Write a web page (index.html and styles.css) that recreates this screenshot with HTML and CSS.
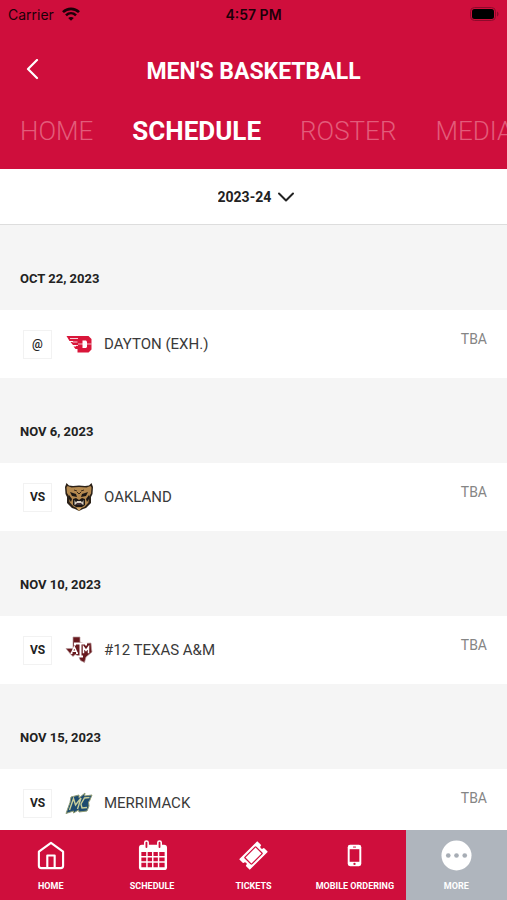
FILE: index.html
```
<!DOCTYPE html>
<html lang="en">
<head>
    <meta charset="UTF-8">
    <meta name="viewport" content="width=device-width, initial-scale=1.0">
    <title>Men's Basketball Schedule</title>
    <link rel="stylesheet" href="styles.css">
</head>
<body>
    <header class="header">
        <div class="status-bar">
            <div class="carrier">
                <span>Carrier</span>
                <svg width="18" height="14" viewBox="0 0 18 14" fill="none" stroke="#1c0008" stroke-width="2.6">
                    <path d="M1 5.2C5.5.7 12.5.7 17 5.2M4 8.4c2.9-2.8 7.1-2.8 10 0"/>
                    <path d="M9 13.8 6.2 11c1.6-1.5 4-1.5 5.6 0z" fill="#1c0008" stroke="none"/>
                </svg>
            </div>
            <time class="clock">4:57 PM</time>
            <svg class="battery" width="29" height="14" viewBox="0 0 29 14">
                <rect x=".5" y=".5" width="25" height="13" rx="4" fill="none" stroke="#8d0a2b"/>
                <rect x="2" y="2" width="22" height="10" rx="2.5" fill="#000"/>
                <path d="M27 4.5c2 .8 2 4.2 0 5z" fill="#8d0a2b"/>
            </svg>
        </div>
        <div class="title-bar">
            <button class="back" aria-label="Back">
                <svg width="14" height="22" viewBox="0 0 14 22" fill="none" stroke="#fff" stroke-width="2.2" stroke-linecap="round" stroke-linejoin="round">
                    <path d="M12 1 3 10l9 9"/>
                </svg>
            </button>
            <h1 class="title">MEN'S BASKETBALL</h1>
        </div>
        <nav class="tabs" aria-label="Team">
            <a class="tab" href="#home">HOME</a>
            <a class="tab active" href="#schedule">SCHEDULE</a>
            <a class="tab" href="#roster">ROSTER</a>
            <a class="tab" href="#media">MEDIA</a>
        </nav>
    </header>

    <main class="content">
        <div class="season">
            <select class="season-select" id="season" aria-label="Season">
                <option>2023-24</option>
            </select>
            <svg class="chevron" width="18" height="12" viewBox="0 0 18 12" fill="none" stroke="#222" stroke-width="2" stroke-linecap="round" stroke-linejoin="round">
                <path d="m2 2.5 7 7 7-7"/>
            </svg>
        </div>

        <section class="day">
            <h2 class="date">OCT 22, 2023</h2>
            <div class="game">
                <span class="place at">@</span>
                <svg class="logo" viewBox="0 0 28 28" aria-hidden="true">
                    <path d="M1.500 6H23.500l3 3v10.500l-3 3H12.500V19h-2l-2-2.500h2.500V15H8l-2.500-3H8v-1H4.500z" fill="#d9163a"/>
                    <path d="M5 8.500h8M7.500 12h5M10 15.500h3" stroke="#fff" stroke-width=".8"/>
                    <path d="M17.500 10.500h3.500l1 1v5.500l-1 1h-3.500z" fill="#fff"/>
                    <path d="M13 14h13.500" stroke="#fff" stroke-width=".7"/>
                </svg>
                <span class="team">DAYTON (EXH.)</span>
                <span class="time">TBA</span>
            </div>
        </section>

        <section class="day">
            <h2 class="date">NOV 6, 2023</h2>
            <div class="game">
                <span class="place">VS</span>
                <svg class="logo" viewBox="0 0 28 28" aria-hidden="true">
                    <path d="M0 4 1.500 0 4 2.500 8 3l6-.5 6 .5 4-.5L26.500 0 28 4l-.5 7-1.500 3v6l-5 5-3 1-4 2-4-2-3-1-5-5v-6L.5 11z" fill="#2b2118"/>
                    <path d="M1.500 4.500 2.500 3l4 1.500L14 4l7.500.5 4-1.500 1 1.500-.5 6-2 3-.5 6-4 4.500L14 26l-5.500-2.500-4-4.500L4 13l-2-3z" fill="#b58a50"/>
                    <path d="m5 9 6 2 1 3-5-1zM23 9l-6 2-1 3 5-1zM8 16l3-1 3 2 3-2 3 1v6l-3 2h-6l-3-2zM4 12l3 4-1 3-2-3zM24 12l-3 4 1 3 2-3z" fill="#1d1815"/>
                    <path d="m12 9 2 2 2-2M9 7l3 1m7-1-3 1" stroke="#3b2a19" fill="none"/>
                    <path d="m9.500 17 1.500 2.500 1-1.500h4l1 1.500 1.500-2.500v5l-2-1h-5l-2 1z" fill="#ddd5c8"/>
                    <path d="M11.500 20h5v2h-5z" fill="#47333a"/>
                    <path d="M11.500 25h5L14 28z" fill="#d0a868"/>
                </svg>
                <span class="team">OAKLAND</span>
                <span class="time">TBA</span>
            </div>
        </section>

        <section class="day">
            <h2 class="date">NOV 10, 2023</h2>
            <div class="game">
                <span class="place">VS</span>
                <svg class="logo" viewBox="0 0 28 28" aria-hidden="true">
                    <path d="M8 1h7v5l4 1.500 7-.5.5 6 .5 3-6 5-1.500 5.500-4-2-2.500-5-3-1-2 2-3-3-4-5h7z" fill="#68191e" stroke="#b99c9d" stroke-width=".7"/>
                    <g stroke="#fff" fill="none">
                        <path d="M10 9.500v-2h11v2M15.500 8v12.500M13 20.500h5" stroke-width="2"/>
                        <path d="m6.500 17 2.800-6 2.800 6M8 15.300h3M5.500 17.300h2m3.500 0h2M18.500 17.300V11l2.500 3.500 2.500-3.500v6.300" stroke-width="1.500"/>
                    </g>
                </svg>
                <span class="team">#12 TEXAS A&amp;M</span>
                <span class="time">TBA</span>
            </div>
        </section>

        <section class="day">
            <h2 class="date">NOV 15, 2023</h2>
            <div class="game">
                <span class="place">VS</span>
                <svg class="logo" viewBox="0 0 28 28" aria-hidden="true">
                    <path d="M6 8 14 6v3l6-5-.5 3L27 6l-2.500 6-1 1 .5 4-2 5-8 1-.5-2-5 3v-2L1 24.500l4-11z" fill="#1e4b70" stroke="#8f9b74" stroke-width="1"/>
                    <path d="m4.500 21 4-11.500L10.500 16l5.500-7-3.500 11" fill="none" stroke="#c9cf9a" stroke-width="1.400"/>
                    <path d="m24.500 8.500-5 .5-3.500 6 1 4 5-.5" fill="none" stroke="#c9cf9a" stroke-width="1.400"/>
                </svg>
                <span class="team">MERRIMACK</span>
                <span class="time">TBA</span>
            </div>
        </section>
    </main>

    <nav class="bottom-nav" aria-label="Main">
        <a class="nav-item" href="#home">
            <svg class="nav-icon" viewBox="0 0 32 32" fill="none" stroke="#fff" stroke-width="2.2" stroke-linejoin="round">
                <path d="M4 12 16.500 3 29 12v14.500q0 2.500-2.500 2.500h-20Q4 29 4 26.500z"/>
                <path d="M12.700 29V16h7.600v13"/>
            </svg>
            <span>HOME</span>
        </a>
        <a class="nav-item" href="#schedule">
            <svg class="nav-icon" viewBox="0 0 32 32">
                <rect x="2" y="5" width="29" height="26" rx="3" fill="#fff"/>
                <g fill="#cf0e3c">
                    <path d="M4.500 12.500H9.500v4H4.500zM11 12.500H15.500v4H11zM17 12.500H21.500v4H17zM23 12.500H28.500v4H23z"/>
                    <path d="M4.500 18H9.500v4H4.500zM11 18H15.500v4H11zM17 18H21.500v4H17zM23 18H28.500v4H23z"/>
                    <path d="M4.500 23.500H9.500v4.500H4.500zM11 23.500H15.500v4.500H11zM17 23.500H21.500v4.500H17zM23 23.500H28.500v4.500H23z"/>
                </g>
                <g fill="#cf0e3c" stroke="#fff" stroke-width="1.600">
                    <rect x="8" y="1" width="3.500" height="8" rx="1.700"/>
                    <rect x="21.500" y="1" width="3.500" height="8" rx="1.700"/>
                </g>
            </svg>
            <span>SCHEDULE</span>
        </a>
        <a class="nav-item" href="#tickets">
            <svg class="nav-icon" viewBox="0 0 32 32">
                <g transform="rotate(-45 16 16)">
                    <path d="M3.500 9h25v4.500a2.500 2.500 0 0 0 0 5V23h-25v-4.500a2.500 2.500 0 0 0 0-5z" fill="#fff" stroke="#fff" stroke-width="1.500" stroke-linejoin="round"/>
                    <rect x="8" y="11" width="16" height="10" rx=".7" fill="none" stroke="#cf0e3c" stroke-width="1.300"/>
                </g>
            </svg>
            <span>TICKETS</span>
        </a>
        <a class="nav-item" href="#ordering">
            <svg class="nav-icon" viewBox="0 0 32 32">
                <rect x="9" y="5" width="14" height="22" rx="2.500" fill="#fff"/>
                <path d="M11 9.500h10v13H11z" fill="#cf0e3c"/>
                <path d="M14.500 7.300h3" stroke="#cf0e3c"/>
                <circle cx="16" cy="24.700" r="1.200" fill="#cf0e3c"/>
            </svg>
            <span>MOBILE ORDERING</span>
        </a>
        <a class="nav-item current" href="#more">
            <svg class="nav-icon" viewBox="0 0 32 32">
                <circle cx="16" cy="16" r="15.500" fill="#fff"/>
                <g fill="#a7adb5">
                    <circle cx="7.500" cy="16" r="2.400"/>
                    <circle cx="16" cy="16" r="2.400"/>
                    <circle cx="24.500" cy="16" r="2.400"/>
                </g>
            </svg>
            <span>MORE</span>
        </a>
    </nav>
</body>
</html>
```
FILE: styles.css
```
* {
    box-sizing: border-box;
}

body {
    display: flex;
    flex-direction: column;
    height: 100vh;
    margin: 0;
    font-family: Roboto, "Liberation Sans", sans-serif;
    background-color: #f5f5f5;
    color: #222;
}

a {
    text-decoration: none;
}

.header {
    flex: none;
    background: #cf0e3c;
    color: #fff;
    overflow: hidden;
}

/* status bar */
.status-bar {
    display: grid;
    grid-template-columns: 1fr auto 1fr;
    align-items: center;
    height: 28px;
    padding: 0 8px;
    font-family: Inter, sans-serif;
    font-size: 14px;
    color: #1c0008;
}

.carrier {
    display: flex;
    align-items: center;
    gap: 8px;
}

.clock {
    font-weight: 600;
}

.battery {
    justify-self: end;
}

/* title and tabs */
.title-bar {
    display: grid;
    grid-template-columns: 40px 1fr 40px;
    align-items: center;
    height: 84px;
    padding: 0 12px;
}

.back {
    display: flex;
    justify-content: center;
    padding: 8px;
    border: none;
    background: none;
    cursor: pointer;
}

.title {
    margin: 0;
    padding-top: 3px;
    font-size: 23px;
    font-weight: 700;
    line-height: 28px;
    text-align: center;
    white-space: nowrap;
}

.tabs {
    display: flex;
    gap: 39px;
    height: 57px;
    padding: 0 20px;
}

.tab {
    flex: none;
    font-size: 26px;
    font-weight: 300;
    line-height: 38px;
    color: #e35c7a;
}

.tab.active {
    font-weight: 700;
    color: #fff;
}

/* schedule */
.content {
    flex: 1;
    min-height: 0;
    overflow: hidden;
}

.season {
    display: flex;
    justify-content: center;
    align-items: center;
    gap: 5px;
    height: 56px;
    padding-left: 5px;
    background: #fff;
    border-bottom: 1px solid #ddd;
}

.season-select {
    appearance: none;
    padding: 0;
    border: none;
    background: none;
    font: inherit;
    font-size: 14px;
    font-weight: 700;
    color: #222;
    cursor: pointer;
}

.chevron {
    pointer-events: none;
}

.date {
    margin: 0;
    padding: 44px 20px 21px;
    font-size: 13px;
    font-weight: 700;
    line-height: 20px;
}

.game {
    display: flex;
    align-items: center;
    height: 68px;
    padding: 0 20px 0 23px;
    background: #fff;
}

.place {
    display: flex;
    justify-content: center;
    align-items: center;
    width: 29px;
    height: 29px;
    border: 1px solid #f2f2f2;
    font-size: 12px;
    font-weight: 700;
}

.place.at {
    font-weight: 500;
}

.logo {
    width: 28px;
    height: 28px;
    margin: 0 11px 0 13px;
}

.team {
    flex: 1;
    font-size: 15px;
    color: #3a3a3a;
}

.time {
    align-self: flex-start;
    padding-top: 19px;
    font-size: 14px;
    line-height: 20px;
    color: #858585;
}

/* bottom navigation */
.bottom-nav {
    flex: none;
    display: grid;
    grid-template-columns: repeat(5, 1fr);
    height: 70px;
    background: #cf0e3c;
}

.nav-item {
    display: flex;
    flex-direction: column;
    align-items: center;
    gap: 8px;
    padding-top: 10px;
    font-size: 9px;
    font-weight: 700;
    line-height: 14px;
    color: #fff;
    white-space: nowrap;
}

.nav-item.current {
    background: #afb5bd;
}

.nav-icon {
    width: 31px;
    height: 31px;
}
```
